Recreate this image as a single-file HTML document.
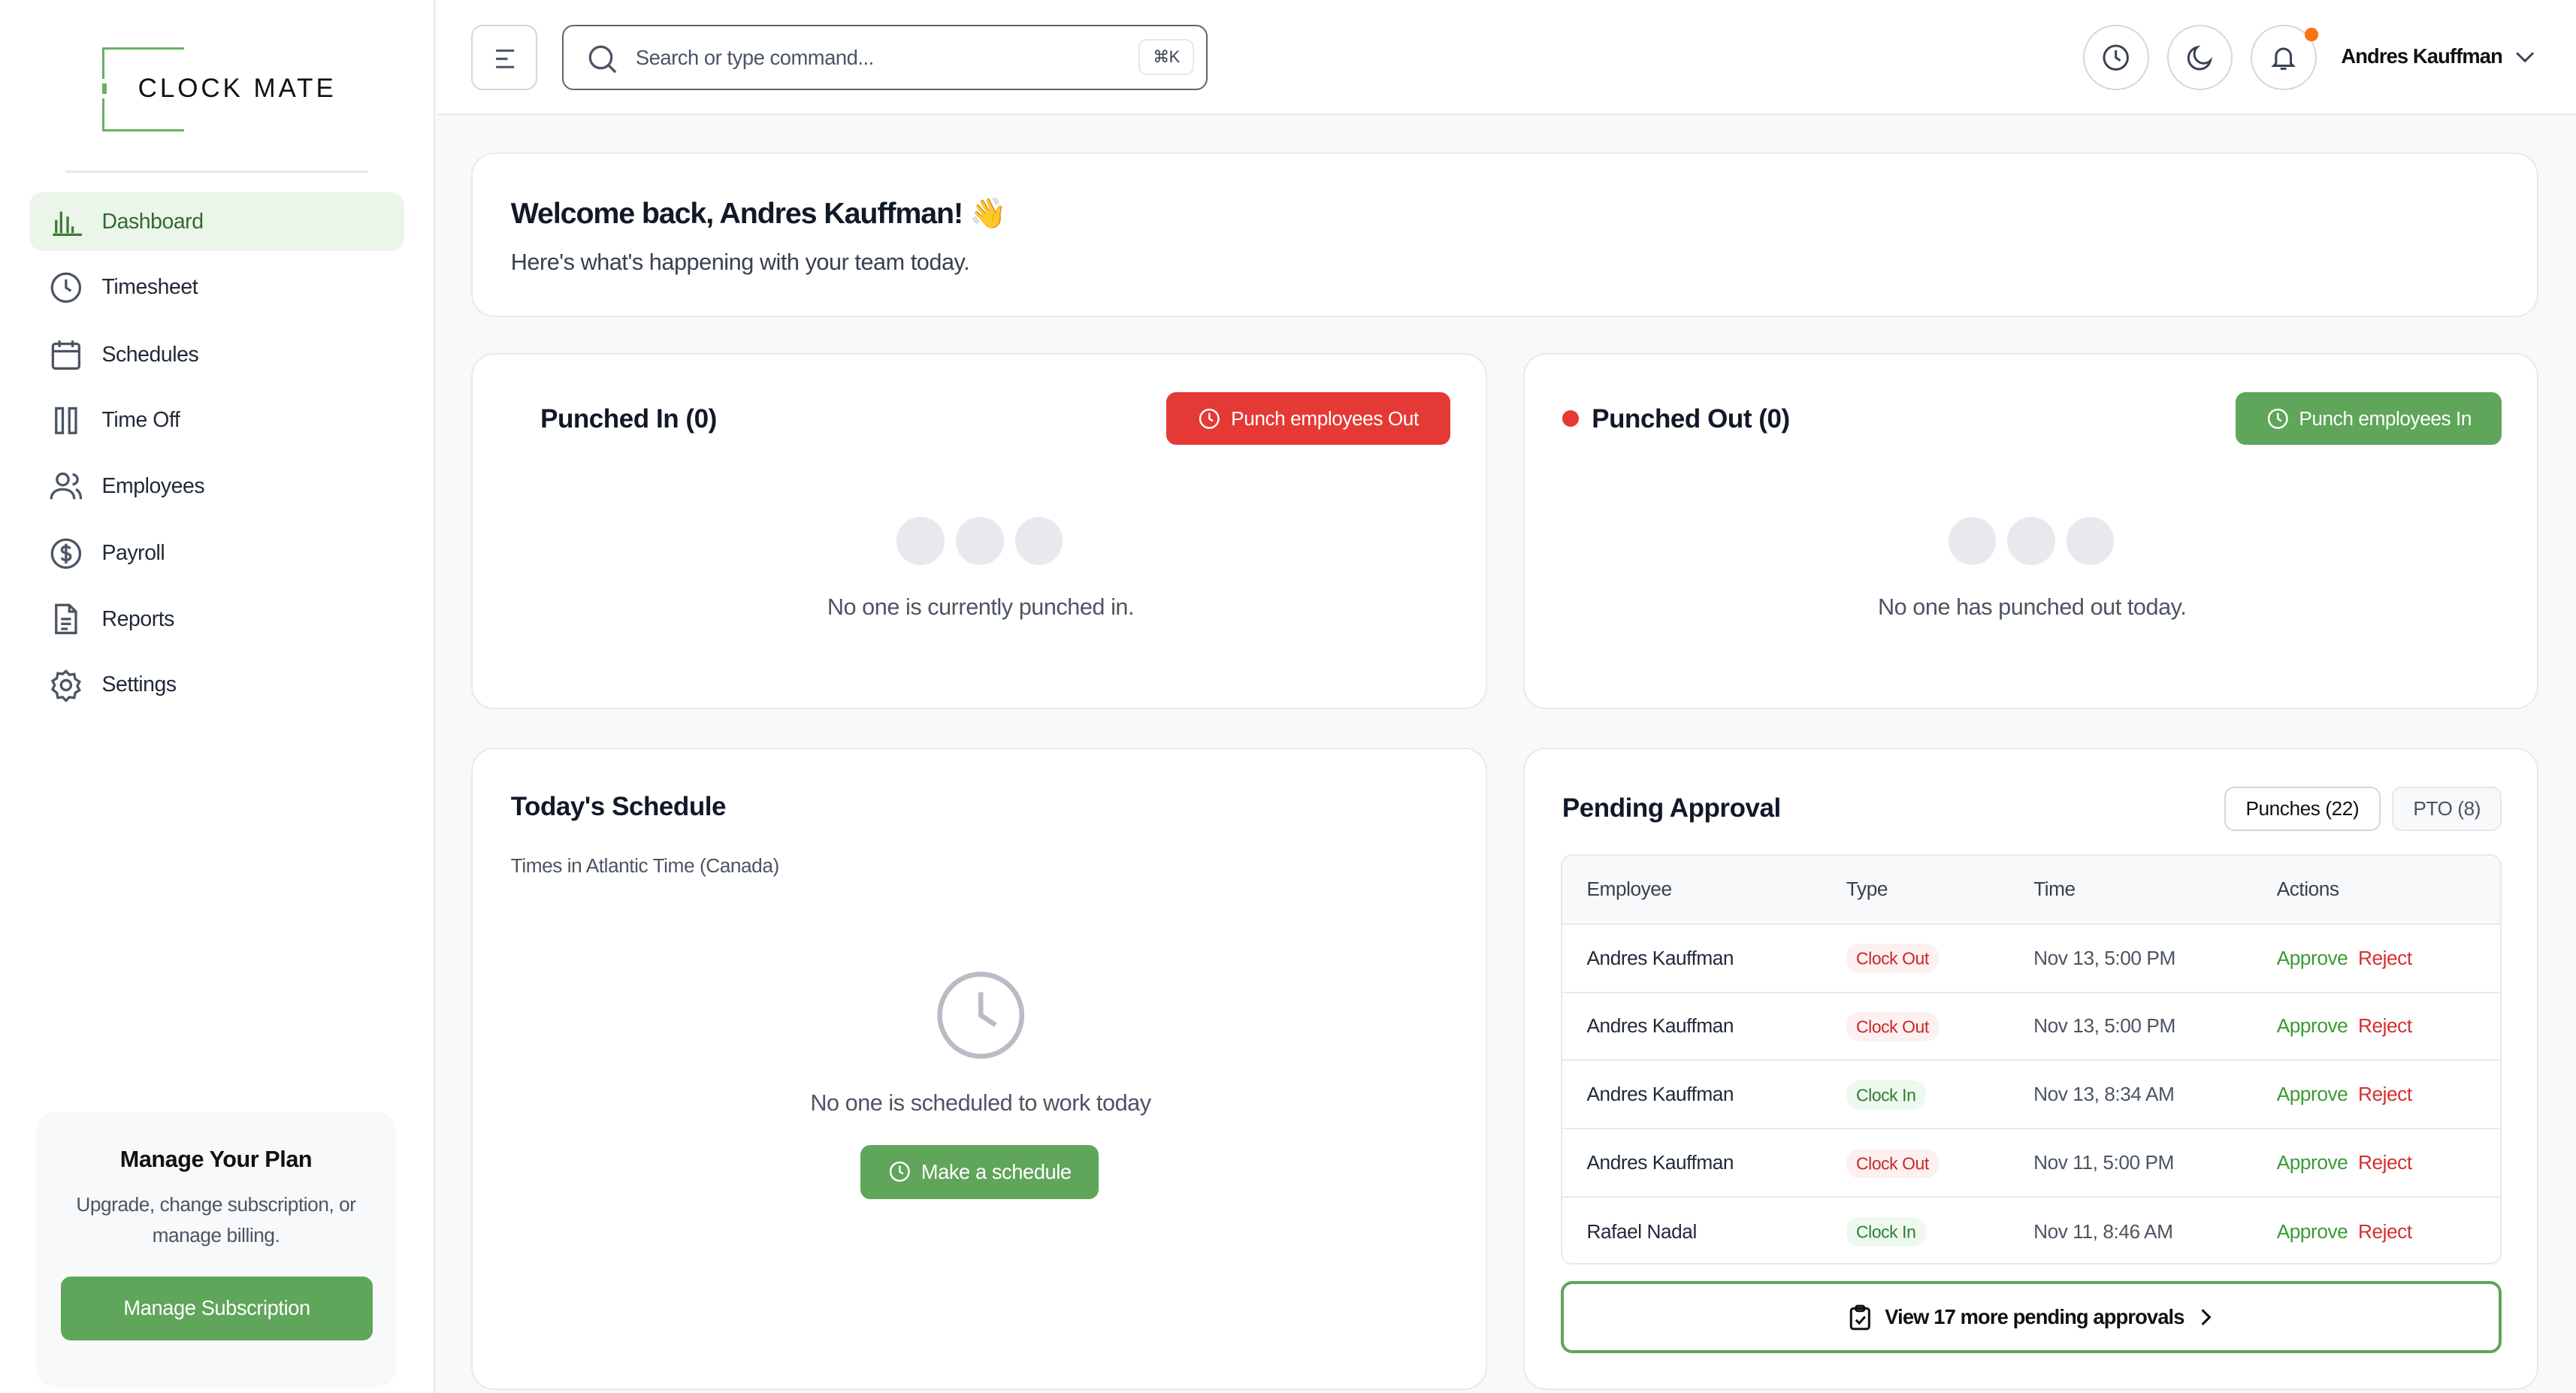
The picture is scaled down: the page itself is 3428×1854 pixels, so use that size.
<!DOCTYPE html>
<html><head><meta charset="utf-8"><style>
*{box-sizing:border-box;margin:0;padding:0}
html,body{width:3428px;height:1854px;overflow:hidden;background:#f8f9fb}
#r{zoom:2.18622;width:1568px;height:848px;position:relative;font-family:"Liberation Sans",sans-serif;color:#1f2937;overflow:hidden;letter-spacing:-0.2px}
.a{position:absolute}
.side{left:0;top:0;width:265px;height:848px;background:#fff;border-right:1px solid #e8e9ee}
.nav{left:18px;width:228px;height:36px;border-radius:8px;display:flex;align-items:center;padding-left:12px;font-size:13px;color:#1f2937}
.nav svg{width:20px;height:20px;margin-right:12px;fill:none;stroke:#4b5563;stroke-width:1.5}
.card{background:#fff;border:1px solid #e8e9ee;border-radius:14px}
.btn{border-radius:6px;color:#fff;font-size:12px;display:flex;align-items:center;justify-content:center;gap:6px}
.dot{width:29px;height:29px;border-radius:50%;background:#e8e9ee}
.circ{width:40px;height:40px;border-radius:50%;border:1px solid #d4d7de;background:#fff;display:flex;align-items:center;justify-content:center}
.circ svg{width:18px;height:18px;fill:none;stroke:#374151;stroke-width:1.5}
td{font-size:12px;height:41.6px;border-top:1px solid #e8e9ee;padding-left:15px}
.co{background:#fdf0f0;color:#c62828;font-size:10.5px;padding:3px 6px;border-radius:8px}
.ci{background:#eef8ee;color:#2e7d32;font-size:10.5px;padding:3px 6px;border-radius:8px}
</style></head><body><div id="r">
<div class="a side">
 <div class="a" style="left:62px;top:29px;width:50px;height:51px;border:1.5px solid #6ab063;border-right:none"></div>
 <div class="a" style="left:110px;top:36px;width:4px;height:36px;background:#fff"></div>
 <div class="a" style="left:60px;top:48px;width:4px;height:12px;background:#fff"></div>
 <div class="a" style="left:62px;top:51px;width:3px;height:6px;background:#6ab063"></div>
 <div class="a" style="left:84px;top:45px;font-size:16px;letter-spacing:1.8px;color:#111">CLOCK MATE</div>
 <div class="a" style="left:40px;top:104px;width:184px;height:1px;background:#e5e7eb"></div>
 <div class="a nav" style="top:117px;background:#ecf5ea;color:#2f6b2d"><svg viewBox="0 0 20 20" style="stroke:#3c7a37"><path d="M2 18h18M4 17V9M7 17V4M11 17V7M14 17v-4"/></svg>Dashboard</div>
 <div class="a nav" style="top:157px"><svg viewBox="0 0 20 20"><circle cx="10" cy="10" r="8.5"/><path d="M10 5v5l3 2"/></svg>Timesheet</div>
 <div class="a nav" style="top:198px"><svg viewBox="0 0 20 20"><rect x="2" y="3.5" width="16" height="15" rx="1.5"/><path d="M2 8h16M6 1.5v4M14 1.5v4"/></svg>Schedules</div>
 <div class="a nav" style="top:238px"><svg viewBox="0 0 20 20"><rect x="4" y="2.5" width="4" height="15"/><rect x="12" y="2.5" width="4" height="15"/></svg>Time Off</div>
 <div class="a nav" style="top:278px"><svg viewBox="0 0 20 20"><circle cx="8" cy="6" r="3.5"/><path d="M1 18c0-4 3-6 7-6s7 2 7 6M14 3a3 3 0 010 6M16 12c2 1 3 3 3 6"/></svg>Employees</div>
 <div class="a nav" style="top:319px"><svg viewBox="0 0 20 20"><circle cx="10" cy="10" r="8.5"/><path d="M12.5 7c-.5-1-1.5-1.3-2.5-1.3-1.5 0-2.5.8-2.5 2s1 1.6 2.5 2 2.7.8 2.7 2.2-1.2 2-2.7 2c-1.2 0-2.2-.5-2.7-1.4M10 4v12"/></svg>Payroll</div>
 <div class="a nav" style="top:359px"><svg viewBox="0 0 20 20"><path d="M4 1.5h8l4 4v13H4zM12 1.5v4h4M7 10h6M7 13h6M7 16h4"/></svg>Reports</div>
 <div class="a nav" style="top:399px"><svg viewBox="0 0 20 20"><circle cx="10" cy="10" r="3"/><path d="M10 1.5l2 2.2 3-.4.6 3 2.6 1.6-1.3 2.6 1.3 2.6-2.6 1.6-.6 3-3-.4-2 2.2-2-2.2-3 .4-.6-3L1.8 12.6 3.1 10 1.8 7.4l2.6-1.6.6-3 3 .4z"/></svg>Settings</div>
 <div class="a" style="left:22px;top:677px;width:219px;height:168px;background:#f8f9fb;border-radius:12px;text-align:center">
  <div style="margin-top:21px;font-size:14px;font-weight:bold;color:#111">Manage Your Plan</div>
  <div style="margin-top:10px;font-size:12px;color:#4b5563;line-height:19px">Upgrade, change subscription, or<br>manage billing.</div>
  <div class="btn" style="margin:15px 0 0 15px;width:190px;height:39px;background:#5fa55a;font-size:12.5px">Manage Subscription</div>
 </div>
</div>
<div class="a" style="left:266px;top:0;width:1302px;height:70px;background:#fff;border-bottom:1px solid #e8e9ee"></div>
<div class="a" style="left:287px;top:15px;width:40px;height:40px;border:1px solid #d4d7de;border-radius:7px;background:#fff"><svg class="a" style="left:13px;top:13px" width="14" height="14" viewBox="0 0 14 14" fill="none" stroke="#4b5563" stroke-width="1.4"><path d="M1 2h11M1 7h7M1 12h11"/></svg></div>
<div class="a" style="left:342px;top:15px;width:393px;height:40px;border:1.3px solid #5b6475;border-radius:7px;background:#fff">
 <svg class="a" style="left:15px;top:11px" width="18" height="18" viewBox="0 0 18 18" fill="none" stroke="#4b5563" stroke-width="1.5"><circle cx="8" cy="8" r="6.5"/><path d="M13 13l4 4"/></svg>
 <div class="a" style="left:44px;top:12px;font-size:12.5px;color:#4b5563">Search or type command...</div>
 <div class="a" style="left:350px;top:8px;width:34px;height:22px;border:1px solid #e5e7eb;border-radius:5px;font-size:10px;text-align:center;line-height:20px;color:#374151">⌘K</div>
</div>
<div class="a circ" style="left:1268px;top:15px"><svg viewBox="0 0 20 20"><circle cx="10" cy="10" r="8"/><path d="M10 5v5l3 2"/></svg></div>
<div class="a circ" style="left:1319px;top:15px"><svg viewBox="0 0 20 20"><path d="M17 12A7.5 7.5 0 118 3a6 6 0 009 9z"/></svg></div>
<div class="a circ" style="left:1370px;top:15px"><svg viewBox="0 0 20 20"><path d="M5 14V9a5 5 0 0110 0v5l1.5 1.5h-13zM8 17.5h4"/></svg></div>
<div class="a" style="left:1403px;top:17px;width:8px;height:8px;border-radius:50%;background:#f97316"></div>
<div class="a" style="left:1425px;top:27px;font-size:12.5px;font-weight:bold;color:#111;letter-spacing:-0.4px">Andres Kauffman</div>
<svg class="a" style="left:1531px;top:30px" width="12" height="10" viewBox="0 0 12 10" fill="none" stroke="#374151" stroke-width="1.3"><path d="M1 2l5 5 5-5"/></svg>

<div class="a card" style="left:287px;top:93px;width:1258px;height:100px">
 <div class="a" style="left:23px;top:25px;font-size:18px;font-weight:bold;color:#111827;letter-spacing:-0.5px">Welcome back, Andres Kauffman! 👋</div>
 <div class="a" style="left:23px;top:58px;font-size:14px;color:#374151">Here's what's happening with your team today.</div>
</div>

<div class="a card" style="left:287px;top:215px;width:618px;height:217px">
 <div class="a" style="left:41px;top:30px;font-size:16px;font-weight:bold;color:#111827">Punched In (0)</div>
 <div class="a btn" style="left:422px;top:23px;width:173px;height:32px;background:#e53935"><svg width="14" height="14" viewBox="0 0 20 20" fill="none" stroke="#fff" stroke-width="1.6"><circle cx="10" cy="10" r="8"/><path d="M10 5v5l3 2"/></svg>Punch employees Out</div>
 <div class="a dot" style="left:258px;top:99px"></div><div class="a dot" style="left:294px;top:99px"></div><div class="a dot" style="left:330px;top:99px"></div>
 <div class="a" style="left:0;width:618px;top:146px;text-align:center;font-size:14px;color:#4b5563">No one is currently punched in.</div>
</div>
<div class="a card" style="left:927px;top:215px;width:618px;height:217px">
 <div class="a" style="left:23px;top:34px;width:10px;height:10px;border-radius:50%;background:#e53935"></div>
 <div class="a" style="left:41px;top:30px;font-size:16px;font-weight:bold;color:#111827">Punched Out (0)</div>
 <div class="a btn" style="left:433px;top:23px;width:162px;height:32px;background:#5fa55a"><svg width="14" height="14" viewBox="0 0 20 20" fill="none" stroke="#fff" stroke-width="1.6"><circle cx="10" cy="10" r="8"/><path d="M10 5v5l3 2"/></svg>Punch employees In</div>
 <div class="a dot" style="left:258px;top:99px"></div><div class="a dot" style="left:294px;top:99px"></div><div class="a dot" style="left:330px;top:99px"></div>
 <div class="a" style="left:0;width:618px;top:146px;text-align:center;font-size:14px;color:#4b5563">No one has punched out today.</div>
</div>

<div class="a card" style="left:287px;top:455px;width:618px;height:391px">
 <div class="a" style="left:23px;top:26px;font-size:16px;font-weight:bold;color:#111827">Today's Schedule</div>
 <div class="a" style="left:23px;top:64px;font-size:12px;color:#4b5563">Times in Atlantic Time (Canada)</div>
 <svg class="a" style="left:281px;top:134px" width="56" height="56" viewBox="0 0 56 56" fill="none" stroke="#b8bcc4" stroke-width="3"><circle cx="28" cy="28" r="25"/><path d="M28 14v14l9 6"/></svg>
 <div class="a" style="left:0;width:618px;top:208px;text-align:center;font-size:14px;color:#4b5563">No one is scheduled to work today</div>
 <div class="a btn" style="left:236px;top:241px;width:145px;height:33px;background:#5fa55a;font-size:12.5px"><svg width="14" height="14" viewBox="0 0 20 20" fill="none" stroke="#fff" stroke-width="1.6"><circle cx="10" cy="10" r="8"/><path d="M10 5v5l3 2"/></svg>Make a schedule</div>
</div>

<div class="a card" style="left:927px;top:455px;width:618px;height:391px">
 <div class="a" style="left:23px;top:27px;font-size:16px;font-weight:bold;color:#111827">Pending Approval</div>
 <div class="a" style="left:426px;top:23px;width:95px;height:27px;border:1px solid #d4d7de;border-radius:6px;font-size:12px;text-align:center;line-height:25px;color:#111">Punches (22)</div>
 <div class="a" style="left:528px;top:23px;width:67px;height:27px;border:1px solid #e5e7eb;border-radius:6px;font-size:12px;text-align:center;line-height:25px;color:#4b5563;background:#f8f9fb">PTO (8)</div>
 <div class="a" style="left:22px;top:64px;width:573px;height:250px;border:1px solid #e8e9ee;border-radius:7px;overflow:hidden">
 <table style="width:100%;border-collapse:collapse">
  <tr style="background:#f8f9fb"><td style="width:158px;border:none;height:40px;color:#374151">Employee</td><td style="width:114px;border:none;color:#374151">Type</td><td style="width:148px;border:none;color:#374151">Time</td><td style="border:none;color:#374151">Actions</td></tr>
  <tr><td>Andres Kauffman</td><td><span class="co">Clock Out</span></td><td style="color:#4b5563">Nov 13, 5:00 PM</td><td><span style="color:#3a9a35">Approve</span>&nbsp;&nbsp;<span style="color:#d32f2f">Reject</span></td></tr>
  <tr><td>Andres Kauffman</td><td><span class="co">Clock Out</span></td><td style="color:#4b5563">Nov 13, 5:00 PM</td><td><span style="color:#3a9a35">Approve</span>&nbsp;&nbsp;<span style="color:#d32f2f">Reject</span></td></tr>
  <tr><td>Andres Kauffman</td><td><span class="ci">Clock In</span></td><td style="color:#4b5563">Nov 13, 8:34 AM</td><td><span style="color:#3a9a35">Approve</span>&nbsp;&nbsp;<span style="color:#d32f2f">Reject</span></td></tr>
  <tr><td>Andres Kauffman</td><td><span class="co">Clock Out</span></td><td style="color:#4b5563">Nov 11, 5:00 PM</td><td><span style="color:#3a9a35">Approve</span>&nbsp;&nbsp;<span style="color:#d32f2f">Reject</span></td></tr>
  <tr><td>Rafael Nadal</td><td><span class="ci">Clock In</span></td><td style="color:#4b5563">Nov 11, 8:46 AM</td><td><span style="color:#3a9a35">Approve</span>&nbsp;&nbsp;<span style="color:#d32f2f">Reject</span></td></tr>
 </table></div>
 <div class="a" style="left:22px;top:324px;width:573px;height:44px;border:2px solid #5fa55a;border-radius:7px;display:flex;align-items:center;justify-content:center;gap:8px;font-size:12.5px;font-weight:bold;color:#111;letter-spacing:-0.4px">
  <svg width="14" height="16" viewBox="0 0 14 16" fill="none" stroke="#111" stroke-width="1.4"><rect x="1.5" y="2.5" width="11" height="12.5" rx="1.5"/><rect x="4.5" y="1" width="5" height="3" rx="1"/><path d="M4.5 9.5l2 2 3.5-4"/></svg>View 17 more pending approvals<svg width="10" height="12" viewBox="0 0 10 12" fill="none" stroke="#111" stroke-width="1.4"><path d="M3 1.5l4.5 4.5L3 10.5"/></svg></div>
</div>
</div></body></html>
